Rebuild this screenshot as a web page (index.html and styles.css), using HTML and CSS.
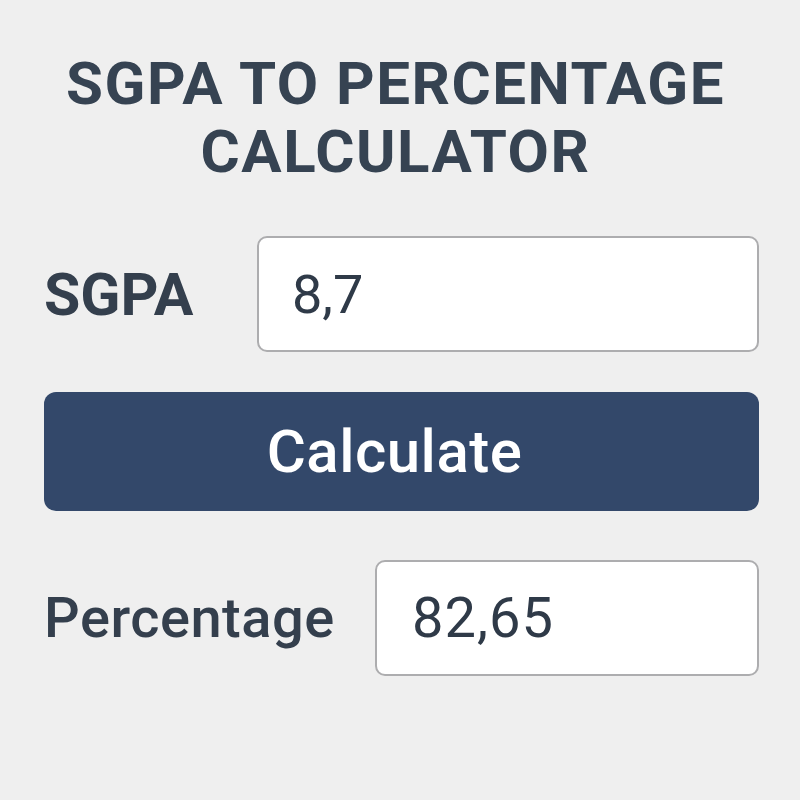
FILE: index.html
```html
<!DOCTYPE html>
<html lang="en">
<head>
<meta charset="utf-8">
<title>SGPA to Percentage Calculator</title>
<link rel="stylesheet" href="styles.css">
</head>
<body>
<main class="calc">
  <h1 class="title">SGPA TO PERCENTAGE<br>CALCULATOR</h1>
  <div class="row row-sgpa">
    <label class="label label-sgpa" for="sgpa">SGPA</label>
    <input class="field field-sgpa" id="sgpa" type="text" value="8,7" readonly>
  </div>
  <button class="btn" type="button">Calculate</button>
  <div class="row row-pct">
    <label class="label label-pct" for="pct">Percentage</label>
    <input class="field field-pct" id="pct" type="text" value="82,65" readonly>
  </div>
</main>
</body>
</html>
```

FILE: styles.css
```css
html, body {
  margin: 0;
  padding: 0;
  background: #efefef;
}

body {
  font-family: Roboto, "Liberation Sans", Arial, sans-serif;
  color: #354252;
}

.calc {
  display: flex;
  flex-direction: column;
  padding: 50px 41px 0 44px;
}

.title {
  margin: 0;
  padding-right: 12px;
  text-align: center;
  font-size: 60px;
  line-height: 68px;
  font-weight: 700;
  letter-spacing: 1.5px;
  color: #364352;
}

.row {
  display: flex;
  align-items: center;
}

.row-sgpa {
  margin-top: 50px;
}

.row-pct {
  margin-top: 49px;
}

.label {
  flex: none;
  color: #343f4d;
}

.label-sgpa {
  width: 213px;
  font-size: 59px;
  font-weight: 700;
}

.label-pct {
  width: 331px;
  font-size: 56px;
  font-weight: 500;
  letter-spacing: 0.5px;
}

.field {
  flex: 1;
  min-width: 0;
  box-sizing: border-box;
  height: 116px;
  border: 2px solid #adadaf;
  border-radius: 10px;
  background: #ffffff;
  font-family: Roboto, "Liberation Sans", Arial, sans-serif;
  font-size: 54px;
  font-weight: 400;
  color: #2f3a48;
  outline: none;
}

.field-sgpa {
  padding: 0 0 0 33px;
}

.field-pct {
  padding: 0 0 0 35px;
  font-size: 56px;
  letter-spacing: 1px;
}

.btn {
  margin-top: 40px;
  height: 119px;
  padding: 0 14px 0 0;
  border: none;
  border-radius: 12px;
  background: #33486a;
  color: #ffffff;
  font-family: Roboto, "Liberation Sans", Arial, sans-serif;
  font-size: 60px;
  font-weight: 500;
  letter-spacing: 0.5px;
  cursor: pointer;
}
```
